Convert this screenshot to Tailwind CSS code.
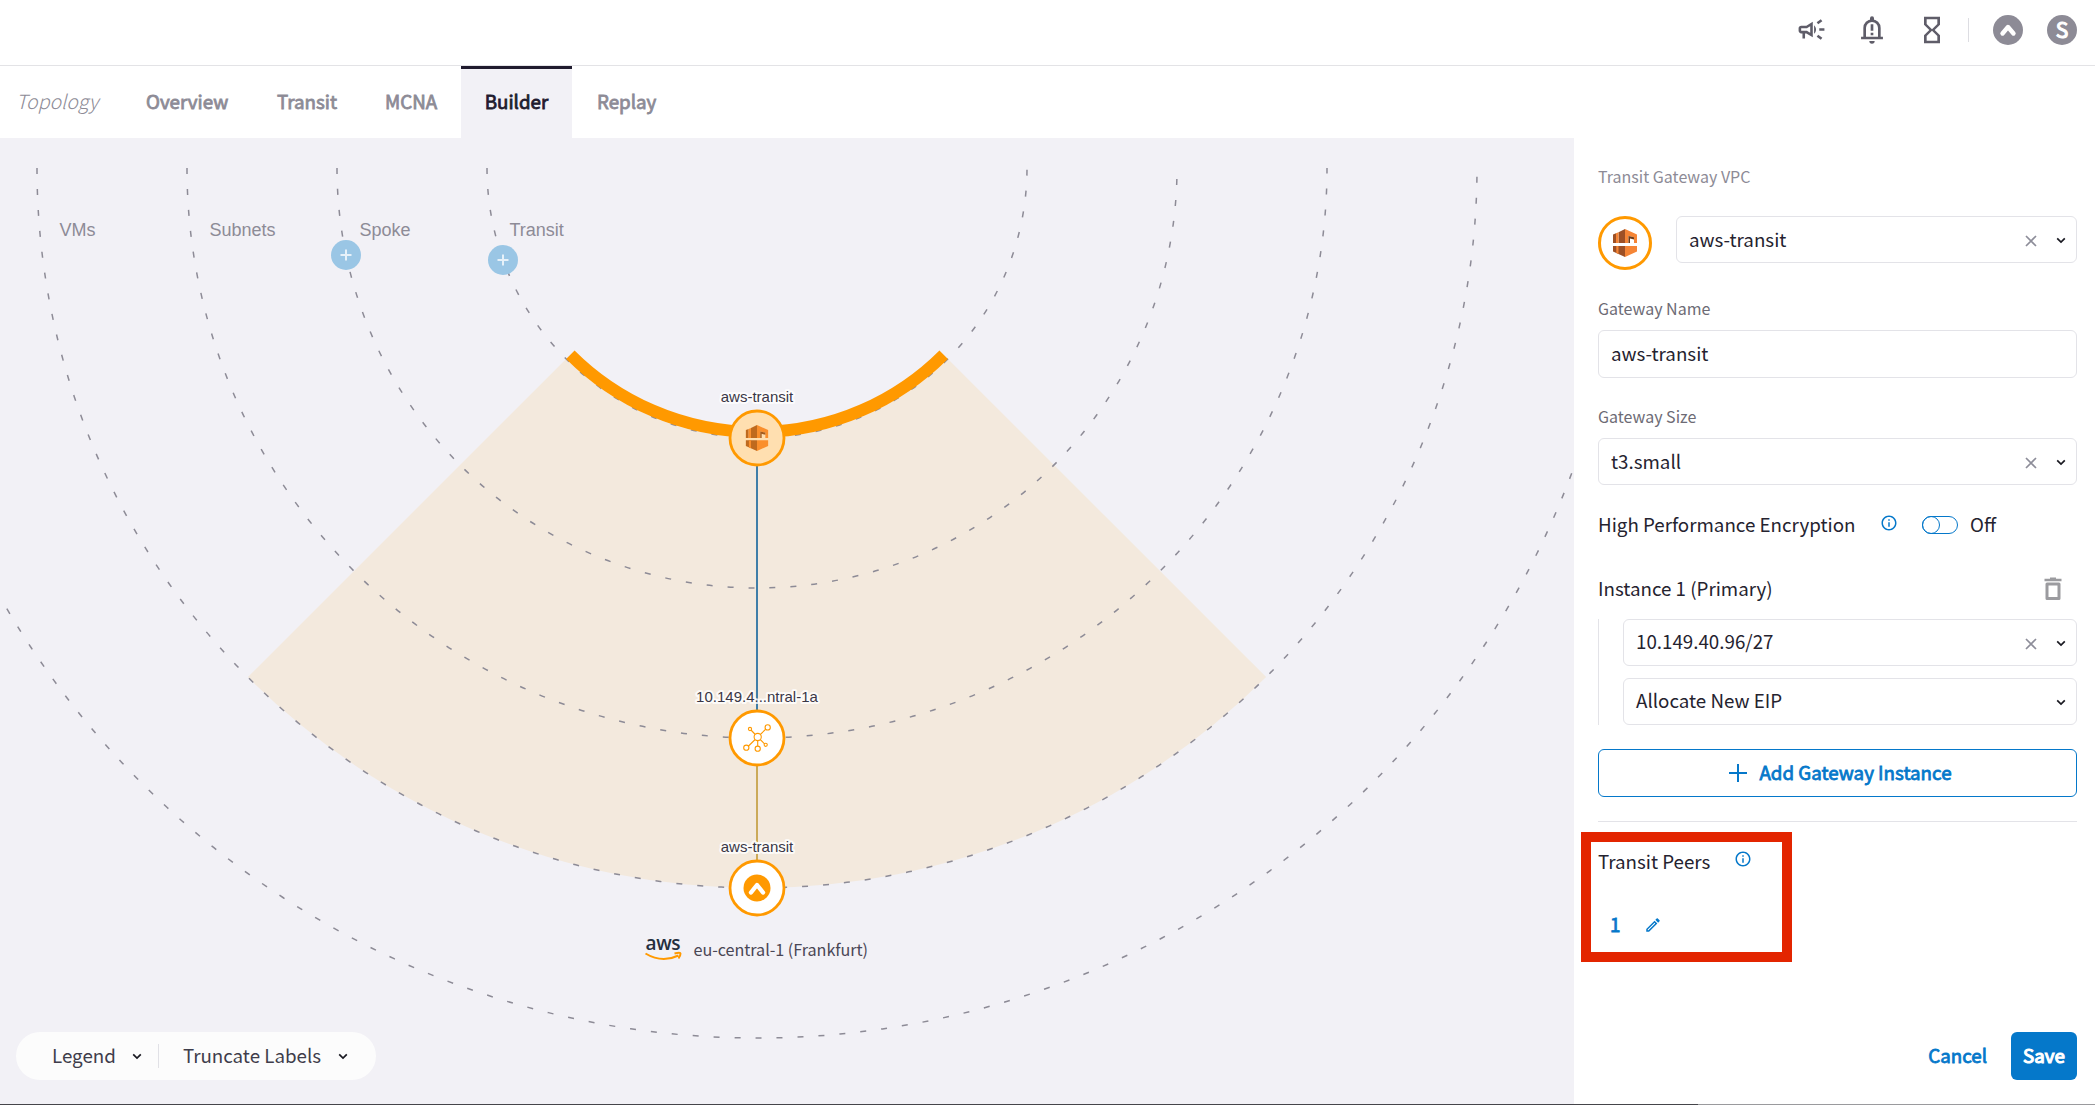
<!DOCTYPE html>
<html lang="en">
<head>
<meta charset="utf-8">
<title>Topology Builder</title>
<script src="https://cdn.jsdelivr.net/npm/@tailwindcss/browser@4"></script>
</head>
<body class="w-[2095px] h-[1105px] overflow-hidden bg-white font-['Noto_Sans_CJK_SC','Noto_Sans',sans-serif] text-[#25232f] flex flex-col">

<svg class="hidden">
  <symbol id="chev" viewBox="0 0 10 7"><path d="M1.2 1.3 5 5l3.8-3.7" fill="none" stroke="#1a1a22" stroke-width="1.7"/></symbol>
  <symbol id="clear" viewBox="0 0 12 12"><path d="M1 1l10 10M11 1 1 11" fill="none" stroke="#8d8d99" stroke-width="1.7"/></symbol>
  <symbol id="info" viewBox="0 0 24 24"><path fill="currentColor" d="M11 7h2v2h-2V7m0 4h2v6h-2v-6m1-9C6.480 2 2 6.480 2 12s4.480 10 10 10 10-4.480 10-10S17.520 2 12 2m0 18c-4.410 0-8-3.590-8-8s3.590-8 8-8 8 3.590 8 8-3.590 8-8 8z"/></symbol>
  <symbol id="vpc" viewBox="0 0 24 28">
    <path fill="#9d5025" d="M0 5.500 3 4.200V14H0zM5.500 3.200 12 0v14H5.500zM0 17h12v11L0 22.500z"/>
    <path fill="#f58536" d="M3 4.200 5.500 3.200V14H3zM12 0l12 5.500V14h-3V8.200L15.500 7v7H12zM12 17h12v5.500L12 28zM3.300 17h2.200v8L3.300 24z"/>
    <path fill="#6b3a19" d="M15.500 7 21 8.200v2.300L17 9.500V14h-1.500z"/>
  </symbol>
  <symbol id="vpc-map" viewBox="0 0 24 28">
    <path fill="#bf6a1e" d="M0 5.500 3 4.200V14H0zM5.500 3.200 12 0v14H5.500zM0 16.500h12V28L0 22.500z"/>
    <path fill="#fa8f2c" d="M3 4.200 5.500 3.200V14H3zM12 0l12 5.500V14h-3V8.200L15.500 7v7H12zM12 16.500h12v6L12 28zM3.300 16.500h2.200v8.500L3.300 24z"/>
    <path fill="#a35a1b" d="M15.500 7 21 8.200v2.300L17 9.500V14h-1.500z"/>
  </symbol>
  <symbol id="peak" viewBox="0 0 30 30"><circle cx="15" cy="15" r="15" fill="currentColor"/><path d="M9.500 18.500 15 12l5.500 6.500" fill="none" stroke="#fff" stroke-width="4.400" stroke-linecap="round" stroke-linejoin="round"/></symbol>
</svg>

<header class="h-[66px] shrink-0 border-b border-[#e3e3e6] flex items-center justify-end pr-[18px] pb-[6px] text-[#5f5d69]">
  <svg class="w-[31px] h-[31px] mr-[29px]" viewBox="0 0 24 24" fill="currentColor"><path d="M18 11v2h4v-2h-4m-2 6.610c.960.710 2.210 1.650 3.200 2.390.4-.530.800-1.070 1.200-1.600-.990-.740-2.240-1.680-3.200-2.400-.4.540-.8 1.080-1.200 1.610M20.400 5.600c-.4-.530-.8-1.070-1.200-1.600-.990.740-2.240 1.680-3.200 2.400.4.530.8 1.070 1.200 1.600.960-.720 2.210-1.650 3.200-2.400M4 9c-1.100 0-2 .9-2 2v2c0 1.100.9 2 2 2h1v4h2v-4h1l5 3V6L8 9H4m5.030 1.710L11 9.530v4.940l-1.970-1.180-.48-.290H4v-2h4.550l.48-.290M15.500 12c0-1.330-.580-2.530-1.500-3.350v6.690c.920-.810 1.500-2.010 1.500-3.340z"/></svg>
  <svg class="w-8 h-8 mr-7" viewBox="0 0 24 24" fill="none"><path d="M6.500 18v-7.500a5.500 5.500 0 0 1 11 0V18M3.800 18h16.400" stroke="currentColor" stroke-width="2"/><path fill="currentColor" d="M10.500 3.200a1.500 1.500 0 0 1 3 0v2h-3zM10 20.300h4a2 2 0 0 1-4 0M11 7.700h2v4.800h-2zm0 6.300h2v2h-2z"/></svg>
  <svg class="w-8 h-8" viewBox="0 0 24 24" fill="currentColor"><path d="M6 2v6h.010L6 8.010 10 12l-4 4 .010.010H6V22h12v-5.990h-.010L18 16l-4-4 4-3.990-.010-.010H18V2H6m10 14.500V20H8v-3.500l4-4 4 4m-4-5-4-4V4h8v3.500l-4 4z"/></svg>
  <div class="w-px h-6 bg-[#dddde2] ml-5 mr-6"></div>
  <svg class="w-[30px] h-[30px] mr-6 text-[#8d8b96]"><use href="#peak"/></svg>
  <div class="w-[30px] h-[30px] rounded-full bg-[#8d8b96] text-white text-[21px] leading-none pb-px [-webkit-text-stroke:1.1px] flex items-center justify-center">S</div>
</header>

<div class="h-[72px] shrink-0 flex text-[18.750px] text-[#8d8b96]">
  <div class="w-[121px] pl-[16px] pb-[2px] flex items-center italic font-light text-[19.500px]">Topology</div>
  <div class="w-[131px] pl-[25px] pb-[2px] flex items-center [-webkit-text-stroke:0.8px]">Overview</div>
  <div class="w-[108px] pl-[25px] pb-[2px] flex items-center [-webkit-text-stroke:0.8px]">Transit</div>
  <div class="w-[101px] pl-[25px] pb-[2px] flex items-center [-webkit-text-stroke:0.8px]">MCNA</div>
  <div class="w-[111px] pb-[5px] flex items-center justify-center bg-[#f2f1f6] border-t-[3px] border-[#1f1b2e] text-[#1f1b2e] [-webkit-text-stroke:0.8px]">Builder</div>
  <div class="pl-[25px] pb-[2px] flex items-center [-webkit-text-stroke:0.8px]">Replay</div>
</div>

<main class="flex-1 flex min-h-0">
  <section class="relative w-[1574px] bg-[#f2f1f6] overflow-hidden">
    <svg class="block w-[1574px] h-[967px]" viewBox="0 138 1574 967" font-family="Liberation Sans, Arial, sans-serif">
      <path fill="#f3e9dd" d="M566.080 358.920A270 270 0 0 0 947.920 358.920L1266.120 677.120A720 720 0 0 1 247.880 677.120Z"/>
      <g fill="none" stroke="#8d8b96" stroke-width="1.500" stroke-dasharray="6 15">
        <path d="M487 168A270 270 0 0 0 1027 168"/><path d="M337 168A420 420 0 0 0 1177 168"/><path d="M187 168A570 570 0 0 0 1327 168"/><path d="M37 168A720 720 0 0 0 1477 168"/><path d="M-113 168A870 870 0 0 0 1627 168"/>
      </g>
      <path fill="none" stroke="#f90" stroke-width="12" d="M570.320 354.680A264 264 0 0 0 943.680 354.680"/>
      <g fill="#8d8b96" font-size="18"><text x="59.500" y="236">VMs</text><text x="209.500" y="236">Subnets</text><text x="359.500" y="236">Spoke</text><text x="509.500" y="236">Transit</text></g>
      <g fill="#9ac6e5"><circle cx="346" cy="255" r="15"/><circle cx="503" cy="260" r="15"/></g>
      <path stroke="#fff" stroke-opacity=".75" stroke-width="2" d="M340.500 255h11M346 249.500v11M497.500 260h11M503 254.500v11"/>
      <path stroke="#3f7ea8" stroke-width="2" d="M757 438V738"/><path stroke="#cbaa59" stroke-width="2" d="M757 738V888"/>
      <g stroke="#f90" stroke-width="2.800" fill="#fff"><circle cx="757" cy="438" r="27" fill="#ffdfb0"/><circle cx="757" cy="738" r="27"/><circle cx="757" cy="888" r="27"/></g>
      <use href="#vpc-map" x="745" y="425" width="24" height="26"/>
      <g stroke="#f90" stroke-width="1.100" fill="#fff"><path d="M757.700 737 750 729M757.700 737 767.500 727.500M757.700 737 746.500 748M757.700 737V748.500M757.700 737 765.500 744.800"/><circle cx="757.700" cy="737" r="3.600"/><circle cx="750" cy="729" r="1.600"/><circle cx="767.700" cy="727.400" r="2.600"/><circle cx="746.300" cy="747.700" r="2.600"/><circle cx="757.700" cy="748.700" r="2.600"/><circle cx="765.700" cy="744.800" r="1.600"/></g>
      <circle cx="757" cy="888" r="13.500" fill="#f90"/><path d="M751 892.500 757 885l6 7.500" fill="none" stroke="#fff" stroke-width="4.400" stroke-linecap="round" stroke-linejoin="round"/>
      <g font-size="15" text-anchor="middle" fill="#3a3746" stroke="#fff" stroke-opacity=".8" stroke-width="4" stroke-linejoin="round" paint-order="stroke"><text x="757" y="402">aws-transit</text><text x="757" y="702">10.149.4...ntral-1a</text><text x="757" y="852">aws-transit</text></g>
      <text x="645.500" y="949.500" font-family="Open Sans" font-weight="600" font-size="19" fill="#252f3e" textLength="35">aws</text>
      <path fill="none" stroke="#f90" stroke-width="2" d="M645.500 953.500Q662 963.500 678.500 955.500M674.500 953.500q6-1.500 6 0q0 2.500-2 5"/>
      <text x="693.500" y="956" font-family="Noto Sans CJK SC" font-size="16.200" fill="#4a4755" textLength="174.500">eu-central-1 (Frankfurt)</text>
    </svg>
    <div class="absolute left-4 bottom-[25px] w-[360px] h-12 rounded-full bg-[#fcfcfc] flex items-center text-[18.750px] text-[#3f3d4b]">
      <span class="ml-9 pb-[2px]">Legend</span><svg class="w-[10px] h-[7px] ml-[16px]"><use href="#chev"/></svg>
      <div class="w-px h-6 bg-[#e1e1e6] ml-4 mr-[24px]"></div>
      <span class="pb-[2px]">Truncate Labels</span><svg class="w-[10px] h-[7px] ml-[17px]"><use href="#chev"/></svg>
    </div>
  </section>

  <aside class="relative flex-1 pl-6 pr-[18px] pt-[27px] text-[18.750px] flex flex-col">
    <div class="h-6 pb-[2px] flex items-center text-[16px] text-[#8d8b96]">Transit Gateway VPC</div>
    <div class="flex mt-[27px] h-[54px]">
      <div class="w-[54px] h-[54px] rounded-full border-[3px] border-[#f90] flex items-center justify-center"><svg class="w-6 h-7"><use href="#vpc"/></svg></div>
      <div class="ml-6 flex-1 h-[47px] border border-[#e3e3e8] rounded-md pl-3 pr-[10px] flex items-center"><span class="flex-1">aws-transit</span><svg class="w-3 h-3 mr-[19px] mt-[2px]"><use href="#clear"/></svg><svg class="w-[10px] h-[7px] mt-[2px]"><use href="#chev"/></svg></div>
    </div>
    <div class="mt-[27px] h-6 pb-[2px] flex items-center text-[16px] text-[#6d6b75]">Gateway Name</div>
    <div class="mt-[9px] h-12 border border-[#e3e3e8] rounded-md pl-3 pb-[2px] flex items-center">aws-transit</div>
    <div class="mt-[27px] h-6 pb-[2px] flex items-center text-[16px] text-[#6d6b75]">Gateway Size</div>
    <div class="mt-[9px] h-[47px] border border-[#e3e3e8] rounded-md pl-3 pr-[10px] flex items-center"><span class="flex-1">t3.small</span><svg class="w-3 h-3 mr-[19px] mt-[2px]"><use href="#clear"/></svg><svg class="w-[10px] h-[7px] mt-[2px]"><use href="#chev"/></svg></div>
    <div class="mt-[28px] h-6 flex items-center"><span class="w-[282px] pb-[2px] whitespace-nowrap">High Performance Encryption</span><svg class="w-[18px] h-[18px] -mt-1 text-[#0578ca]"><use href="#info"/></svg>
      <div class="ml-6 w-9 h-[18px] border border-[#0578ca] rounded-full flex"><div class="w-[18px] h-[18px] -m-px border border-[#0578ca] rounded-full"></div></div><span class="ml-3 pb-[2px]">Off</span></div>
    <div class="mt-[40px] h-6 flex items-center justify-between pr-3"><span class="pb-[2px]">Instance 1 (Primary)</span>
      <svg class="w-6 h-6" viewBox="0 0 24 24" fill="none" stroke="#9b9b9f"><path stroke-width="3" d="M6 7h12v14.500H6z" stroke-linejoin="round"/><path stroke-width="2.500" d="M3.500 3h17"/><path stroke-width="2" d="M9 1.500h6"/></svg></div>
    <div class="mt-[18px] border-l border-[#e3e3e8] pl-6 flex flex-col gap-3">
      <div class="h-[47px] border border-[#e3e3e8] rounded-md pl-3 pr-[10px] flex items-center"><span class="flex-1 pb-[2px]">10.149.40.96/27</span><svg class="w-3 h-3 mr-[19px] mt-[2px]"><use href="#clear"/></svg><svg class="w-[10px] h-[7px] mt-[2px]"><use href="#chev"/></svg></div>
      <div class="h-[47px] border border-[#e3e3e8] rounded-md pl-3 pr-[10px] flex items-center"><span class="flex-1 pb-[2px]">Allocate New EIP</span><svg class="w-[10px] h-[7px] mt-[2px]"><use href="#chev"/></svg></div>
    </div>
    <div class="mt-6 h-12 border border-[#0578ca] rounded-md flex items-center justify-center gap-3 pl-[6px] text-[#0578ca] [-webkit-text-stroke:0.8px]"><svg class="w-[18px] h-[18px]" viewBox="0 0 18 18"><path stroke="#0578ca" stroke-width="2" d="M0 9h18M9 0v18"/></svg><span class="pb-[2px]">Add Gateway Instance</span></div>
    <div class="mt-6 h-px bg-[#e3e3e8]"></div>
    <div class="mt-7 h-6 flex items-center"><span class="w-[136px] pb-[2px]">Transit Peers</span><svg class="w-[18px] h-[18px] -mt-[6px] text-[#0578ca]"><use href="#info"/></svg></div>
    <div class="mt-[39px] mb-px h-6 flex items-center pl-[12px] text-[#0578ca] [-webkit-text-stroke:0.8px]"><span class="pb-[2px]">1</span><svg class="w-[18px] h-[18px] ml-6" viewBox="0 0 24 24" fill="currentColor"><path d="m14.060 9 .940.940L5.920 19H5v-.920L14.060 9m3.600-6c-.250 0-.510.100-.700.290l-1.830 1.830 3.750 3.750 1.830-1.830c.390-.390.390-1.040 0-1.410l-2.340-2.340c-.2-.2-.450-.290-.710-.290m-3.600 3.190L3 17.250V21h3.750L17.810 9.940l-3.750-3.750z"/></svg></div>
    <div class="mt-auto mb-[25px] flex items-center justify-end [-webkit-text-stroke:0.8px]"><span class="text-[#0578ca] mr-6 pb-[2px]">Cancel</span><div class="w-[66px] h-12 pb-[2px] rounded-md bg-[#0578ca] text-white flex items-center justify-center [-webkit-text-stroke:1.1px]">Save</div></div>
    <div class="absolute left-[7px] top-[694px] w-[211px] h-[130px] border-[10px] border-[#e32500]"></div>
  </aside>
</main>
<div class="absolute left-0 bottom-0 w-full h-px flex"><div class="w-[1698px] bg-[#45454a]"></div><div class="flex-1 bg-[#9a9a9d]"></div></div>
</body>
</html>
